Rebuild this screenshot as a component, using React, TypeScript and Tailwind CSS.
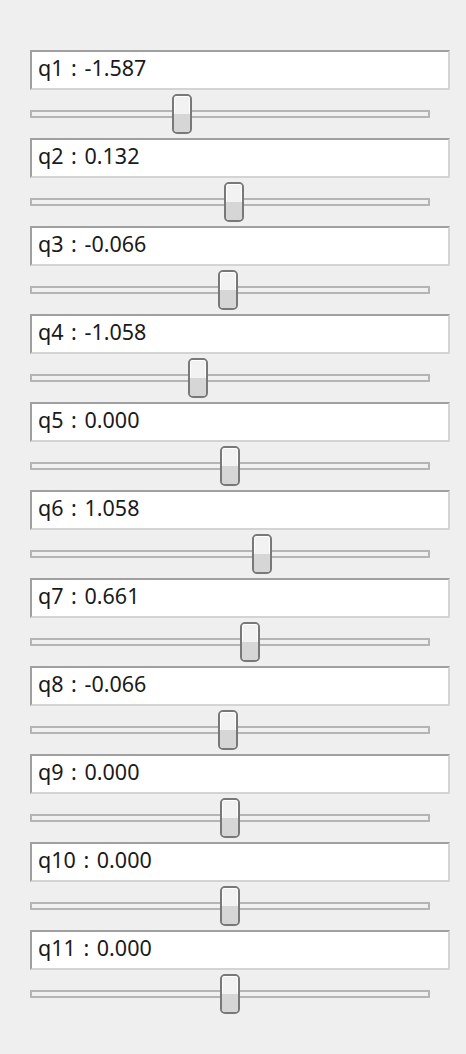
const joints = [
  { name: 'q1', value: -1.587 },
  { name: 'q2', value: 0.132 },
  { name: 'q3', value: -0.066 },
  { name: 'q4', value: -1.058 },
  { name: 'q5', value: 0.0 },
  { name: 'q6', value: 1.058 },
  { name: 'q7', value: 0.661 },
  { name: 'q8', value: -0.066 },
  { name: 'q9', value: 0.0 },
  { name: 'q10', value: 0.0 },
  { name: 'q11', value: 0.0 },
];

// slider spans -2π .. 2π over the 380px the handle can travel
const handleLeft = (v: number) => 190 + (v / (2 * Math.PI)) * 190;

function JointSlider({ value }: { value: number }) {
  return (
    <div className="relative h-[48px] w-[400px]">
      <div className="absolute left-0 top-[20px] h-[8px] w-[400px] border-2 border-[#b4b4b4] bg-[#f0f0f0]" />
      <div
        className="absolute top-[4px] flex h-[40px] w-[20px] flex-col overflow-hidden rounded-[5px] border-2 border-[#787878] bg-[#f2f2f2]"
        style={{ left: handleLeft(value) }}
      >
        <div className="flex-1 border-x border-t border-white" />
        <div className="h-[18px] bg-[#d6d6d6]" />
      </div>
    </div>
  );
}

export default function App() {
  return (
    <div className="min-h-[1054px] w-[466px] bg-[#efefef] px-[30px] pt-[50px]" style={{ fontFamily: '"Noto Sans", "Open Sans", sans-serif' }}>
      {joints.map(j => (
        <div key={j.name} className="flex flex-col">
          <div className="flex h-[40px] w-[420px] items-center border-2 border-t-[#a0a0a0] border-l-[#a0a0a0] border-b-[#d4d4d4] border-r-[#d4d4d4] bg-white pb-[3px] pl-[6px] text-[21.5px] text-[#1a1a1a] [word-spacing:2px]">
            {j.name} : {j.value.toFixed(3)}
          </div>
          <JointSlider value={j.value} />
        </div>
      ))}
    </div>
  );
}
